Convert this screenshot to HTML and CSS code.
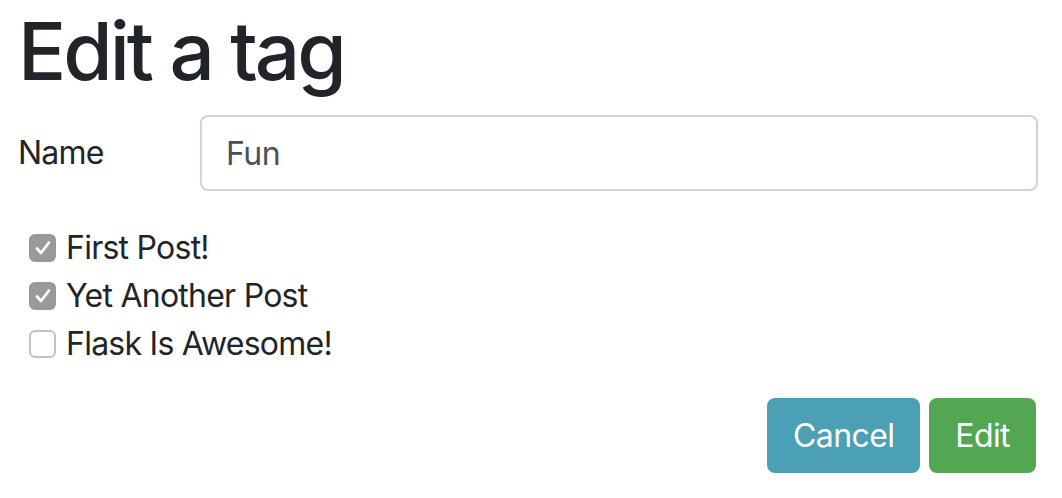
FILE: index.html
```html
<!DOCTYPE html>
<html>
<head>
<meta charset="utf-8">
<link rel="stylesheet" href="styles.css">
</head>
<body>
<div class="container">
  <h1 class="title">Edit a tag</h1>
  <form class="form">
    <div class="form-row">
      <label class="label" for="name">Name</label>
      <input class="input" id="name" type="text" value="Fun">
    </div>
    <div class="checks">
      <label class="check">
        <span class="box checked"><svg viewBox="0 0 28 28" width="28" height="28"><path d="M8 14.5 L12 19 L20 8.5" fill="none" stroke="#fff" stroke-width="2.8" stroke-linecap="round" stroke-linejoin="round"/></svg></span>
        <span class="check-text">First Post!</span>
      </label>
      <label class="check">
        <span class="box checked"><svg viewBox="0 0 28 28" width="28" height="28"><path d="M8 14.5 L12 19 L20 8.5" fill="none" stroke="#fff" stroke-width="2.8" stroke-linecap="round" stroke-linejoin="round"/></svg></span>
        <span class="check-text">Yet Another Post</span>
      </label>
      <label class="check">
        <span class="box"></span>
        <span class="check-text">Flask Is Awesome!</span>
      </label>
    </div>
    <div class="actions">
      <button type="button" class="btn btn-info">Cancel</button>
      <button type="button" class="btn btn-success">Edit</button>
    </div>
  </form>
</div>
</body>
</html>
```

FILE: styles.css
```css
html, body {
  margin: 0;
  padding: 0;
  background: #fff;
}
body {
  font-family: Inter, "Noto Sans", "Liberation Sans", sans-serif;
  color: #212529;
}
.container {
  padding: 3px 24px 0 18px;
}
.title {
  margin: 0 0 16px 0;
  font-size: 80px;
  font-weight: 500;
  line-height: 96px;
  letter-spacing: -3px;
}
.form {
  margin: 0;
}
.form-row {
  display: flex;
  align-items: center;
}
.label {
  width: 182px;
  flex: none;
  font-size: 32px;
  line-height: 48px;
  font-weight: 400;
  letter-spacing: -0.75px;
}
.input {
  flex: 1;
  min-width: 0;
  box-sizing: border-box;
  height: 76px;
  padding: 12px 24px;
  font-family: inherit;
  font-size: 32px;
  line-height: 48px;
  letter-spacing: -0.5px;
  color: #495057;
  background: #fff;
  border: 2px solid #ced4da;
  border-radius: 8px;
  outline: none;
}
.checks {
  margin-top: 33px;
  padding-left: 11px;
  display: flex;
  flex-direction: column;
}
.check {
  display: flex;
  align-items: center;
  gap: 10px;
  height: 48px;
  font-size: 32px;
  line-height: 48px;
  letter-spacing: -0.75px;
}
.box {
  width: 27px;
  height: 28px;
  box-sizing: border-box;
  border-radius: 6px;
  border: 2px solid #c3c3c6;
  background: #fff;
  display: flex;
  align-items: center;
  justify-content: center;
  overflow: hidden;
}
.box.checked {
  background: #99989d;
  border-color: #99989d;
}
.box svg {
  flex: none;
}
.actions {
  margin-top: 30px;
  display: flex;
  justify-content: flex-end;
  gap: 9px;
  padding-right: 2px;
}
.btn {
  box-sizing: border-box;
  height: 75px;
  padding: 12px 24px;
  font-family: inherit;
  font-size: 32px;
  line-height: 48px;
  letter-spacing: -0.6px;
  color: #fff;
  border: 2px solid transparent;
  border-radius: 8px;
}
.btn-info {
  background: #4ba0b5;
  border-color: #4ba0b5;
}
.btn-success {
  background: #53a652;
  border-color: #53a652;
}
```
